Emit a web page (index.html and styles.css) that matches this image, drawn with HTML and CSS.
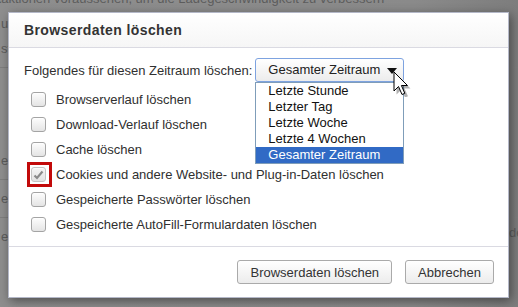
FILE: index.html
```html
<!DOCTYPE html>
<html lang="de">

<head>
    <meta charset="UTF-8">
    <title>Browserdaten löschen</title>
    <link rel="stylesheet" href="styles.css">
</head>

<body>
    <!-- page behind the overlay -->
    <div class="backdrop">
        <p class="bg-line first">Netzwerkaktionen voraussehen, um die Ladegeschwindigkeit zu verbessern</p>
        <p class="bg-line">u</p>
        <p class="bg-line">st</p>
        <hr class="bg-rule">
        <p class="bg-line gap">er</p>
        <hr class="bg-rule">
        <p class="bg-line">e</p>
        <hr class="bg-rule">
        <p class="bg-line">e</p>
        <p class="bg-line right">de</p>
    </div>

    <div class="dialog">
        <div class="dialog-header">
            <h1>Browserdaten löschen</h1>
        </div>

        <div class="dialog-body">
            <div class="period-row">
                <span class="period-label">Folgendes für diesen Zeitraum löschen:</span>
                <div class="select">
                    <div class="select-btn">Gesamter Zeitraum<span class="select-arrow"></span></div>
                    <ul class="select-menu">
                        <li>Letzte Stunde</li>
                        <li>Letzter Tag</li>
                        <li>Letzte Woche</li>
                        <li>Letzte 4 Wochen</li>
                        <li class="selected">Gesamter Zeitraum</li>
                    </ul>
                    <svg class="cursor" width="18" height="26" viewBox="0 0 18 26">
                        <polygon points="2,2 2,22 7,17 10.5,25 13.5,23.8 10,16 16,16" fill="rgba(0,0,0,0.3)" transform="translate(1.5,1.5)" />
                        <polygon points="1,1 1,20 5.5,15.5 9,23.5 11.8,22.3 8.4,14.5 14.5,14.5" fill="#fff" stroke="#000" stroke-width="1" stroke-linejoin="miter" />
                    </svg>
                </div>
            </div>

            <ul class="options">
                <li><span class="box"></span>Browserverlauf löschen</li>
                <li><span class="box"></span>Download-Verlauf löschen</li>
                <li><span class="box"></span>Cache löschen</li>
                <li>
                    <span class="mark">
                        <span class="box checked">
                            <svg width="11" height="10" viewBox="0 0 11 10">
                                <path d="M1.5 5.5 L4 8 L9.5 1.5" fill="none" stroke="#8a8a8a" stroke-width="2.2" />
                            </svg>
                        </span>
                    </span>Cookies und andere Website- und Plug-in-Daten löschen
                </li>
                <li><span class="box"></span>Gespeicherte Passwörter löschen</li>
                <li><span class="box"></span>Gespeicherte AutoFill-Formulardaten löschen</li>
            </ul>
        </div>

        <div class="dialog-footer">
            <button class="btn">Browserdaten löschen</button>
            <button class="btn">Abbrechen</button>
        </div>
    </div>
</body>

</html>
```

FILE: styles.css
```css
/* Reset */
* {
    margin: 0;
    padding: 0;
    box-sizing: border-box;
}

body {
    font-family: 'Liberation Sans', Arial, sans-serif;
    font-size: 13px;
    color: #303030;
    width: 518px;
    height: 307px;
    overflow: hidden;
    position: relative;
    background: linear-gradient(90deg, #8e8e8e 0%, #8a8a8a 80%, #7d7d7d 100%);
}

/* Page behind the overlay */
.backdrop {
    color: #5c5c5c;
    line-height: 25px;
}

.bg-line {
    white-space: nowrap;
    padding-left: 1px;
}

.bg-line.first {
    margin-top: -14px;
    margin-left: -54px;
}

.bg-line.gap {
    margin-top: 80px;
}

.bg-line.right {
    position: absolute;
    left: 508px;
    top: 220px;
}

.bg-rule {
    border: none;
    border-top: 1px solid #7e7e7e;
    margin: 6px 0;
}

/* Dialog */
.dialog {
    position: absolute;
    left: 8px;
    top: 12px;
    width: 501px;
    height: 286px;
    background: #fff;
    border: 1px solid #b4b8c8;
    box-shadow: 2px 3px 10px rgba(0, 0, 0, 0.45);
    display: flex;
    flex-direction: column;
}

.dialog-header {
    height: 35px;
    padding: 9px 15px 0;
    background: linear-gradient(#ffffff, #f6f6f6);
    border-bottom: 1px solid #dadae2;
}

.dialog-header h1 {
    font-size: 14px;
    font-weight: bold;
    color: #333;
    letter-spacing: 0.4px;
}

.dialog-body {
    flex: 1;
    padding: 10px 15px 0;
}

.period-row {
    display: flex;
    align-items: center;
    gap: 3px;
}

.select {
    position: relative;
}

.select-btn {
    width: 149px;
    height: 24px;
    line-height: 22px;
    padding-left: 12px;
    border: 1px solid #7ea3e0;
    border-radius: 3px;
    background: linear-gradient(#ffffff, #ececec);
    color: #222;
    position: relative;
}

.select-arrow {
    position: absolute;
    right: 6px;
    top: 9px;
    border-left: 5px solid transparent;
    border-right: 5px solid transparent;
    border-top: 6px solid #111;
}

.select-menu {
    position: absolute;
    left: 0;
    top: 24px;
    width: 149px;
    list-style: none;
    background: #fff;
    border: 1px solid #7f9db9;
    z-index: 2;
}

.select-menu li {
    height: 16px;
    line-height: 16px;
    padding-left: 12px;
    color: #111;
}

.select-menu li.selected {
    background: #316ac5;
    color: #fff;
}

.cursor {
    position: absolute;
    left: 138px;
    top: 13px;
    z-index: 3;
}

/* Checkbox list */
.options {
    list-style: none;
    margin-top: 5px;
}

.options li {
    height: 25px;
    display: flex;
    align-items: center;
    gap: 10px;
    padding-left: 7px;
}

.box {
    width: 15px;
    height: 15px;
    border: 1px solid #a4a4a4;
    border-radius: 3px;
    background: linear-gradient(#fdfdfd, #e4e4e4);
    box-shadow: inset 0 1px 1px rgba(255, 255, 255, 0.8);
    display: flex;
    align-items: center;
    justify-content: center;
    flex-shrink: 0;
}

.box.checked {
    border-color: #c4c4c4;
    background: linear-gradient(#f4f4f4, #e2e2e2);
}

/* red marker round the checked box */
.mark {
    border: 3px solid #c20a0a;
    padding: 2px 3px 2px 1px;
    margin: 0 -6px 0 -4px;
    display: flex;
}

/* Footer */
.dialog-footer {
    height: 51px;
    border-top: 1px solid #dadae2;
    display: flex;
    justify-content: flex-end;
    align-items: flex-start;
    gap: 13px;
    padding: 13px 14px 0;
}

.btn {
    height: 24px;
    padding: 0 12px;
    font-family: 'Liberation Sans', Arial, sans-serif;
    font-size: 13px;
    color: #333;
    border: 1px solid #aaaaaa;
    border-radius: 3px;
    background: linear-gradient(#ffffff, #ececec);
}
```
